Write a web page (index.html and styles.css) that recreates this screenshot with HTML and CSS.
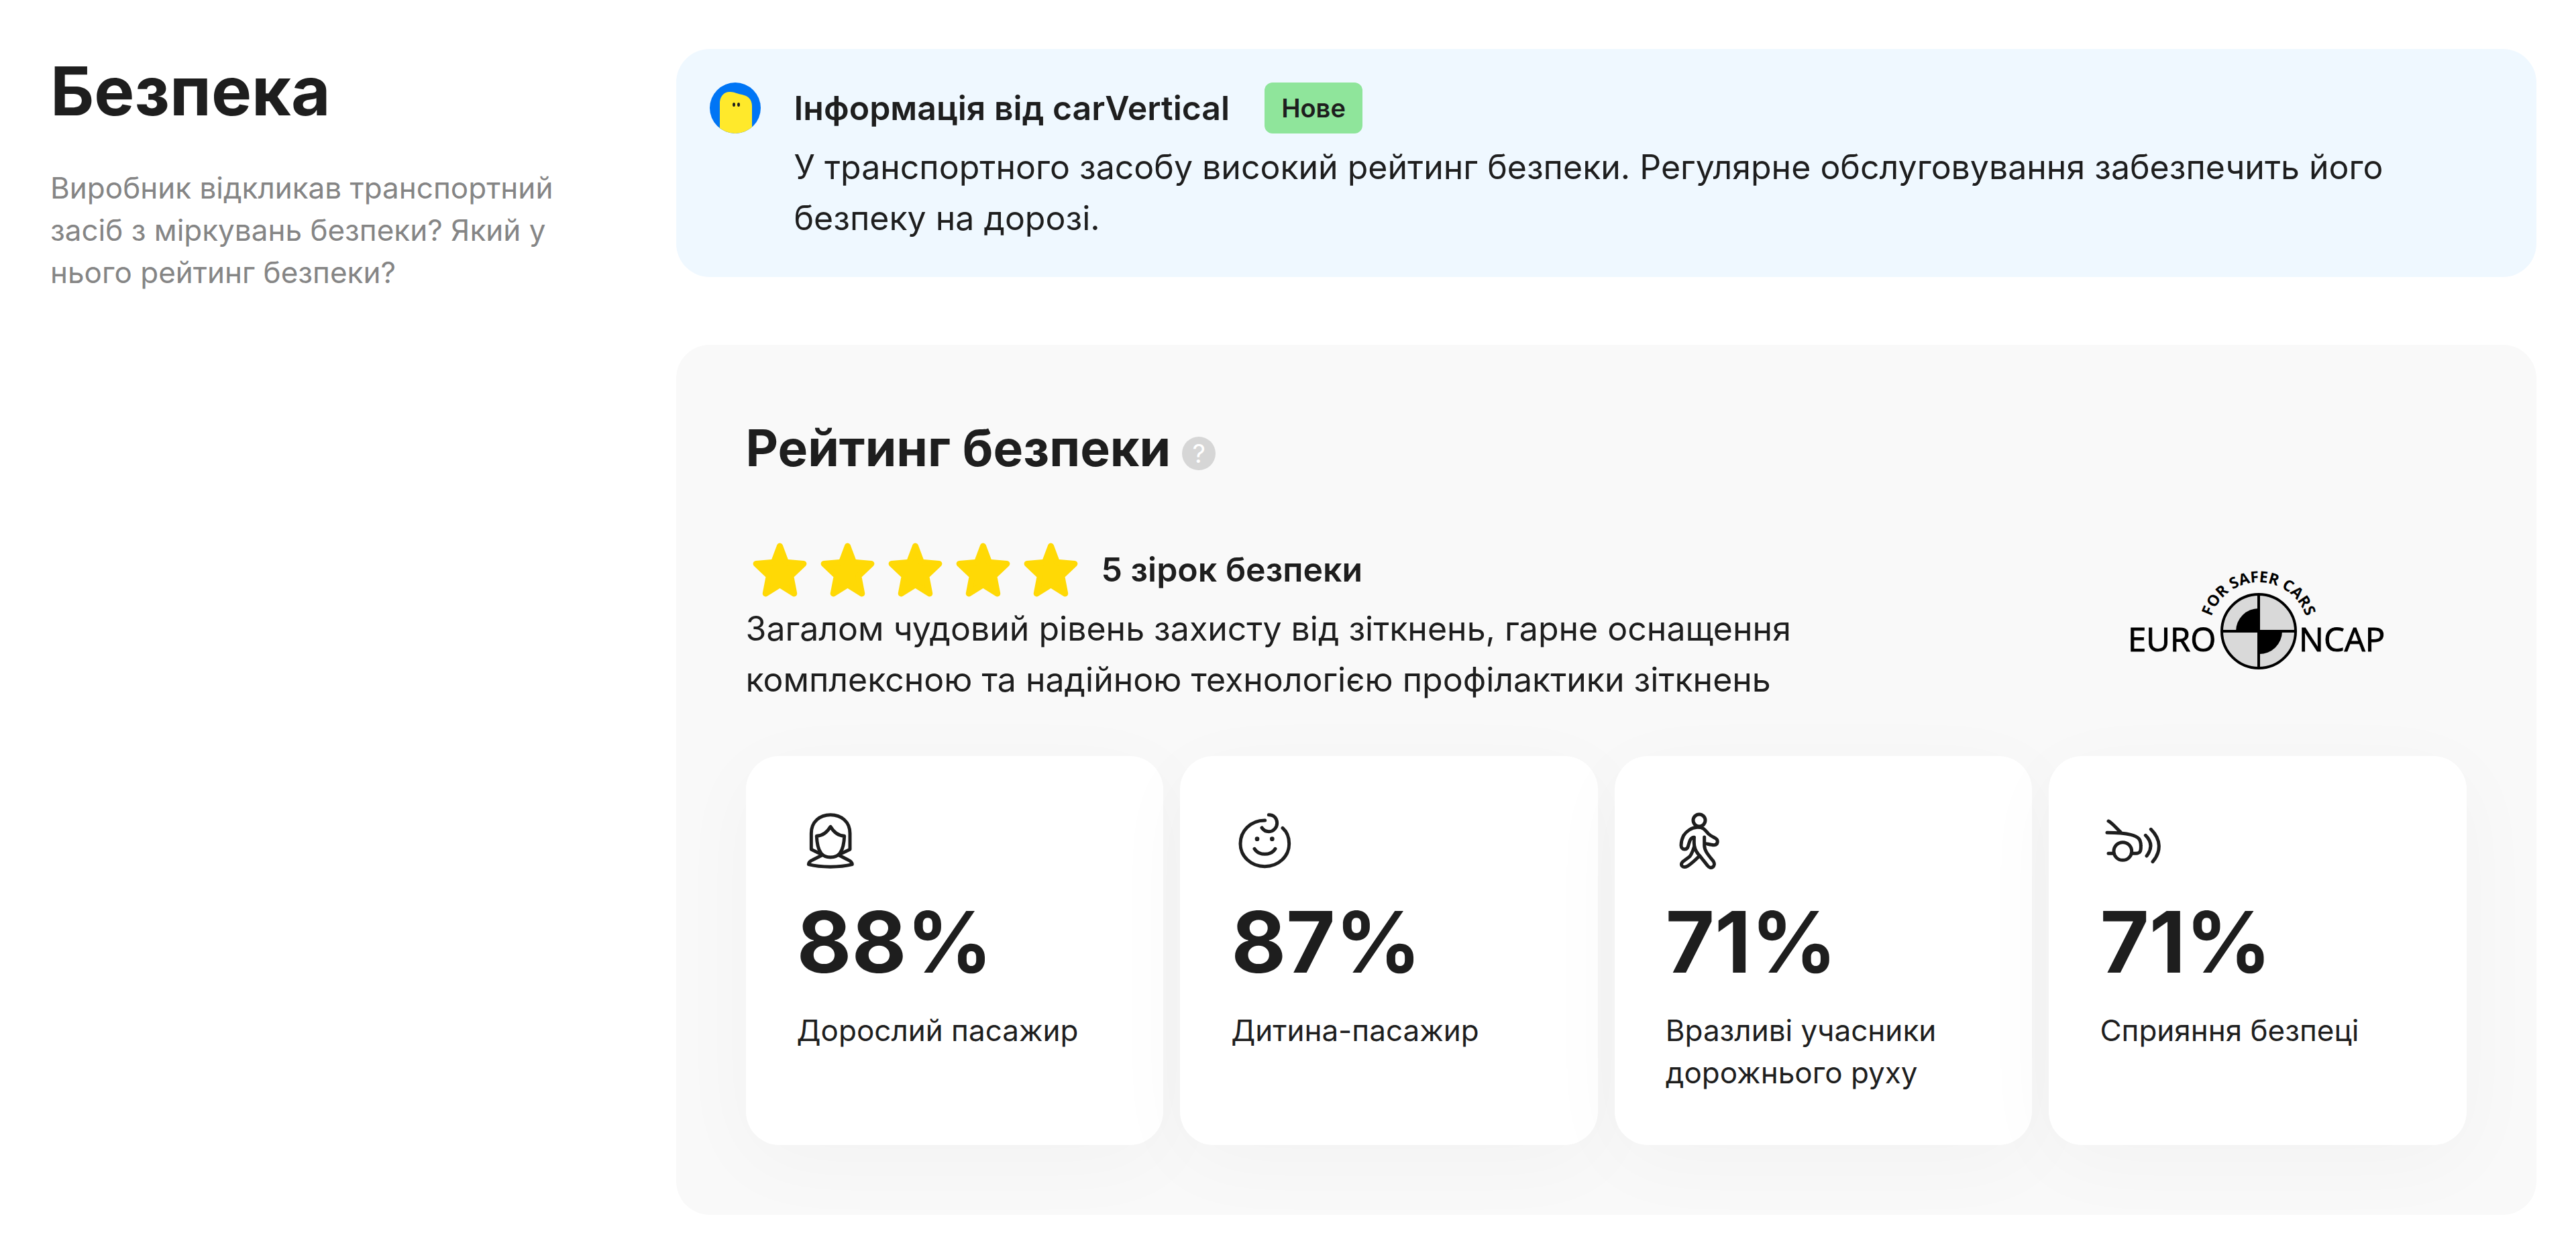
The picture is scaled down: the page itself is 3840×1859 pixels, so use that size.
FILE: index.html
```html
<!DOCTYPE html>
<html lang="uk">
<head>
<meta charset="utf-8">
<meta name="viewport" content="width=device-width, initial-scale=1">
<title>Безпека</title>
<link rel="stylesheet" href="styles.css">
</head>
<body>
<main class="section">
  <header class="intro">
    <h1 class="intro-title">Безпека</h1>
    <p class="intro-text">Виробник відкликав транспортний засіб з міркувань безпеки? Який у нього рейтинг безпеки?</p>
  </header>

  <div class="content">
    <article class="note">
      <svg class="avatar" viewBox="0 0 76 76" aria-hidden="true">
        <defs><clipPath id="avatar-clip"><circle cx="38" cy="38" r="38"/></clipPath></defs>
        <g clip-path="url(#avatar-clip)">
          <rect width="76" height="76" fill="#0075f5"/>
          <path d="M15 76V29C16 19 23 13 31 14C37 14 41 17 48 18C57 20 63 25 63 35V76Z" fill="#ffe92b"/>
          <ellipse cx="36" cy="33" rx="2" ry="3" fill="#1e1e1e"/>
          <ellipse cx="43" cy="33" rx="2" ry="3" fill="#1e1e1e"/>
        </g>
      </svg>
      <div class="note-body">
        <div class="note-head">
          <h2 class="lead">Інформація від carVertical</h2>
          <span class="badge">Нове</span>
        </div>
        <p class="text">У транспортного засобу високий рейтинг безпеки. Регулярне обслуговування забезпечить його безпеку на дорозі.</p>
      </div>
    </article>

    <section class="rating">
      <div class="rating-head">
        <h2 class="rating-title">Рейтинг безпеки</h2>
        <button class="help" type="button" aria-label="Довідка">?</button>
      </div>

      <div class="summary">
        <div class="summary-body">
          <div class="score">
            <div class="stars">
              <svg class="star" viewBox="0 0 100 100" aria-hidden="true"><path id="star" d="M50 16L59 40L85 42L66 60L71 86L50 73L29 86L34 60L15 42L41 40Z"/></svg>
              <svg class="star" viewBox="0 0 100 100" aria-hidden="true"><use href="#star"/></svg>
              <svg class="star" viewBox="0 0 100 100" aria-hidden="true"><use href="#star"/></svg>
              <svg class="star" viewBox="0 0 100 100" aria-hidden="true"><use href="#star"/></svg>
              <svg class="star" viewBox="0 0 100 100" aria-hidden="true"><use href="#star"/></svg>
            </div>
            <h3 class="lead">5 зірок безпеки</h3>
          </div>
          <p class="text">Загалом чудовий рівень захисту від зіткнень, гарне оснащення комплексною та надійною технологією профілактики зіткнень</p>
        </div>
        <svg class="ncap" viewBox="0 0 380 150" role="img" aria-label="Euro NCAP">
          <path id="ncap-arc" d="M120 113A74 74 0 1 1 262 113" fill="none"/>
          <text class="ncap-arc-text"><textPath href="#ncap-arc" startOffset="50%" text-anchor="middle">FOR SAFER CARS</textPath></text>
          <circle cx="191" cy="91" r="55" fill="#d9d9d9" stroke="#000" stroke-width="4"/>
          <path d="M191 91H157A34 34 0 0 1 191 57ZM191 91H226A34 34 0 0 1 191 125Z"/>
          <path d="M191 36V146M136 91H246" stroke="#000" stroke-width="4"/>
          <text class="ncap-word" x="-4" y="121">EURO</text>
          <text class="ncap-word" x="251" y="121">NCAP</text>
        </svg>
      </div>

      <ul class="cards">
        <li class="card">
          <svg class="icon" viewBox="144 72 300 300" aria-hidden="true">
            <path d="M254 284L208 262V190C208 138 246 107 294 107S381 138 381 190V262L334 284"/>
            <path d="M294 160C280 184 262 201 232 202C233 230 238 260 252 279C264 294 277 297 294 297S324 294 336 279C350 260 355 230 356 202C326 201 308 184 294 160Z"/>
            <path d="M257 287L214 309C203 314 196 321 196 329C250 343 336 343 391 329C391 321 384 314 373 309L331 287"/>
          </svg>
          <strong class="value">88%</strong>
          <span class="label">Дорослий пасажир</span>
        </li>
        <li class="card">
          <svg class="icon" viewBox="105 72 300 300" aria-hidden="true">
            <path d="M257 132C190 132 147 182 147 236C147 293 194 338 256 338S365 293 365 236C365 207 354 182 336 166"/>
            <path d="M274 107C298 107 311 124 311 144S295 182 275 182C260 182 249 174 243 165"/>
            <path d="M210 259C230 291 283 291 303 259"/>
            <g class="dots"><circle cx="222" cy="215" r="10"/><circle cx="289" cy="215" r="10"/></g>
          </svg>
          <strong class="value">87%</strong>
          <span class="label">Дитина-пасажир</span>
        </li>
        <li class="card">
          <svg class="icon" viewBox="129 72 300 300" aria-hidden="true">
            <circle cx="279" cy="132" r="27"/>
            <path d="M256 208C240 208 236 224 230 246C225 266 199 267 198 244C198 230 203 212 209 200C221 181 244 164 270 163C300 162 305 176 320 192C333 204 345 207 353 213C365 221 363 241 346 242C335 243 320 238 305 235"/>
            <path d="M256 208V232C256 257 266 275 281 290L316 334C330 354 355 338 343 316C323 291 302 269 302 244V207"/>
            <path d="M257 248C251 266 247 281 237 293L205 317C190 333 207 347 226 337C247 324 264 307 280 291"/>
          </svg>
          <strong class="value">71%</strong>
          <span class="label">Вразливі учасники дорожнього руху</span>
        </li>
        <li class="card">
          <svg class="icon" viewBox="151 72 300 300" aria-hidden="true">
            <path d="M190 135C205 142 222 163 244 184M184 187C225 187 258 188 290 196C324 204 335 217 335 245C336 270 332 279 312 280H295M190 280H213"/>
            <circle cx="254" cy="270" r="40"/>
            <path d="M356 199C385 228 385 260 361 291M380 172C426 218 427 271 388 317"/>
          </svg>
          <strong class="value">71%</strong>
          <span class="label">Сприяння безпеці</span>
        </li>
      </ul>
    </section>
  </div>
</main>
</body>
</html>
```
FILE: styles.css
```css
* {
  box-sizing: border-box;
  margin: 0;
  padding: 0;
}

body {
  background: #fff;
  color: #1e1e1e;
  font-family: Inter, "Liberation Sans", sans-serif;
  font-size: 50px;
  line-height: 76px;
}

.section {
  display: grid;
  grid-template-columns: minmax(0, 1fr) minmax(0, 3fr);
  gap: 8px;
  padding: 73px 59px 48px 75px;
}

.intro {
  display: flex;
  flex-direction: column;
  gap: 52px;
  padding-right: 100px;
}

.intro-title {
  font-size: 101px;
  font-weight: 700;
  line-height: 124px;
}

.intro-text {
  color: #858585;
  font-size: 44px;
  line-height: 63px;
}

.content {
  display: flex;
  flex-direction: column;
  gap: 101px;
}

.note {
  display: flex;
  gap: 50px;
  padding: 50px;
  border-radius: 50px;
  background: #eff8ff;
}

.avatar {
  flex: none;
  width: 76px;
  height: 76px;
}

.note-body {
  display: flex;
  flex-direction: column;
  gap: 12px;
  padding-right: 76px;
}

.note-head {
  display: flex;
  align-items: center;
  gap: 52px;
}

.lead {
  font-size: 50px;
  font-weight: 600;
  line-height: 76px;
}

.badge {
  padding: 0 25px;
  border-radius: 12px;
  background: #8fe59b;
  font-size: 38px;
  font-weight: 600;
  line-height: 76px;
}

.rating {
  display: flex;
  flex-direction: column;
  gap: 76px;
  padding: 104px;
  border-radius: 50px;
  background: #f9f9f9;
}

.rating-head {
  display: flex;
  align-items: center;
  gap: 17px;
  margin-bottom: 4px;
}

.rating-title {
  font-size: 75px;
  font-weight: 700;
  line-height: 100px;
}

.help {
  width: 50px;
  height: 50px;
  margin-top: 16px;
  border: 0;
  border-radius: 50%;
  background: #d6d6d6;
  color: #fff;
  font: 400 38px/50px Inter, "Liberation Sans", sans-serif;
}

.summary {
  display: grid;
  grid-template-columns: repeat(4, minmax(0, 1fr));
  align-items: center;
  gap: 25px;
}

.summary-body {
  grid-column: span 3;
  padding-right: 50px;
}

.score {
  display: flex;
  align-items: center;
  gap: 25px;
}

.stars {
  display: flex;
}

.star {
  width: 101px;
  height: 101px;
  fill: #ffd905;
  stroke: #ffd905;
  stroke-width: 9px;
  stroke-linejoin: round;
}

.ncap {
  width: 380px;
  height: 150px;
  overflow: visible;
  justify-self: center;
}

.ncap-word {
  font: 400 49px "Open Sans", sans-serif;
  stroke: #000;
  stroke-width: 1px;
}

.ncap-arc-text {
  font: 700 23px "Open Sans", sans-serif;
}

.cards {
  display: grid;
  grid-template-columns: repeat(4, minmax(0, 1fr));
  gap: 25px;
  list-style: none;
}

.card {
  display: flex;
  flex-direction: column;
  gap: 25px;
  padding: 76px;
  border-radius: 50px;
  background: #fff;
  box-shadow: 0 25px 126px rgba(0, 0, 0, 0.03);
}

.icon {
  width: 100px;
  height: 100px;
  fill: none;
  stroke: #1e1e1e;
  stroke-width: 15px;
  stroke-linecap: round;
  stroke-linejoin: round;
}

.dots {
  fill: #1e1e1e;
  stroke: none;
}

.value {
  font-size: 126px;
  font-weight: 700;
  line-height: 152px;
}

.label {
  font-size: 44px;
  line-height: 63px;
}
```
